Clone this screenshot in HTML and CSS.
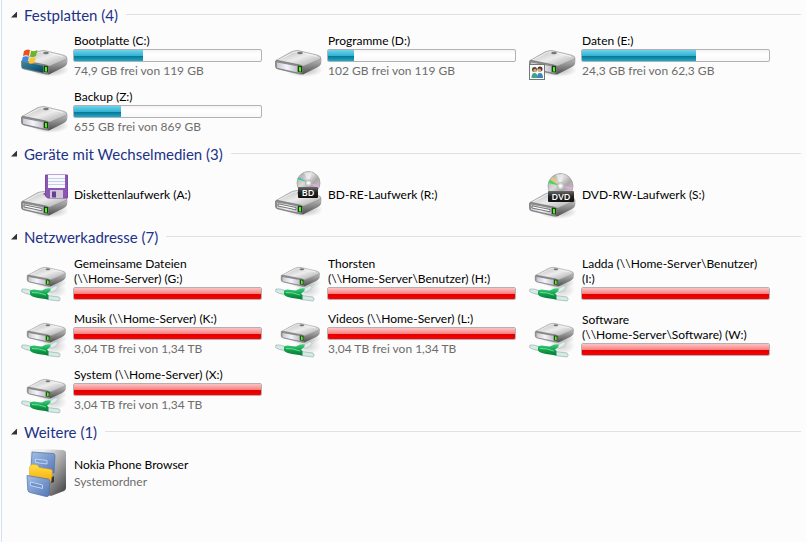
FILE: index.html
```
<!DOCTYPE html>
<html lang="de">
<head>
    <meta charset="UTF-8">
    <meta name="viewport" content="width=device-width, initial-scale=1.0">
    <title>Computer</title>
    <link rel="stylesheet" href="styles.css">
</head>
<body>
    <!-- shared icons -->
    <svg class="sprite" width="0" height="0" aria-hidden="true">
        <defs>
            <linearGradient id="top" x1="0" y1="0" x2="1" y2="1">
                <stop offset="0" stop-color="#b4b4b4"/>
                <stop offset="0.5" stop-color="#ececec"/>
                <stop offset="1" stop-color="#a0a0a0"/>
            </linearGradient>
            <linearGradient id="side" x1="0" y1="0" x2="0" y2="1">
                <stop offset="0" stop-color="#c6c6c6"/>
                <stop offset="1" stop-color="#4c4c4c"/>
            </linearGradient>
            <linearGradient id="front" x1="0" y1="0" x2="1" y2="0">
                <stop offset="0" stop-color="#c9c9d2"/>
                <stop offset="0.5" stop-color="#f4f4fc"/>
                <stop offset="1" stop-color="#c2c2cc"/>
            </linearGradient>
            <linearGradient id="teal" x1="0" y1="0" x2="1" y2="1">
                <stop offset="0" stop-color="#4b7f92"/>
                <stop offset="0.5" stop-color="#1b6b88"/>
                <stop offset="1" stop-color="#123c50"/>
            </linearGradient>
            <linearGradient id="disc" x1="0" y1="0" x2="1" y2="1">
                <stop offset="0" stop-color="#9c9c9c"/>
                <stop offset="0.4" stop-color="#dcdcdc"/>
                <stop offset="0.6" stop-color="#a8a8a8"/>
                <stop offset="1" stop-color="#dcdcdc"/>
            </linearGradient>
            <linearGradient id="label" x1="0" y1="0" x2="0" y2="1">
                <stop offset="0" stop-color="#6a6a6a"/>
                <stop offset="0.5" stop-color="#222"/>
                <stop offset="1" stop-color="#111"/>
            </linearGradient>
            <linearGradient id="green" x1="0" y1="0" x2="0" y2="1">
                <stop offset="0" stop-color="#3fd07c"/>
                <stop offset="0.5" stop-color="#12a34e"/>
                <stop offset="1" stop-color="#067a35"/>
            </linearGradient>
            <linearGradient id="drawer" x1="0" y1="0" x2="1" y2="1">
                <stop offset="0" stop-color="#a3bfe6"/>
                <stop offset="1" stop-color="#5476b4"/>
            </linearGradient>
            <linearGradient id="cabinet" x1="0" y1="0" x2="1" y2="1">
                <stop offset="0.2" stop-color="#f0f0f0"/>
                <stop offset="0.6" stop-color="#9a9a9a"/>
                <stop offset="1" stop-color="#3a3a3a"/>
            </linearGradient>
            <linearGradient id="folder" x1="0" y1="0" x2="0" y2="1">
                <stop offset="0" stop-color="#ffe04c"/>
                <stop offset="1" stop-color="#f7ac00"/>
            </linearGradient>
            <radialGradient id="shade">
                <stop offset="0" stop-color="#000" stop-opacity="0.3"/>
                <stop offset="1" stop-color="#000" stop-opacity="0"/>
            </radialGradient>
        </defs>

        <symbol id="drive" viewBox="0 0 48 48">
            <ellipse cx="30" cy="38" rx="19" ry="7" fill="url(#shade)"/>
            <path d="M27 32 L46 25.500 Q47.500 26 47.500 28 L47 32 Q46 34 43 35.500 L29 42.500 L26 42Z" fill="url(#side)"/>
            <path d="M2 28.500 L17 20 Q20 18.500 24 18.500 L43 23 Q47.500 24 47 27 L30 34 Q27 34.500 24 33.500 L4 30Z" fill="url(#top)" stroke="#8a8a8a" stroke-width="0.600"/>
            <path d="M4 28.500 L19 20.500 Q22 19.500 25 20 L43 24.500" fill="none" stroke="#fff" stroke-opacity="0.600"/>
            <path d="M1.500 29 Q2 28 4 28.500 L26 33 Q29 33.500 29 36 L28.500 41 Q28 42.500 25.500 42 L4 37 Q1.500 36.500 1.500 34.500Z" fill="#8d8d8d" stroke="#666" stroke-width="0.600"/>
            <path d="M3 30.500 L23 34.300 V40.200 L3 35.800Z" fill="url(#front)"/>
            <ellipse cx="26" cy="21" rx="2.800" ry="1.200" fill="#777"/>
            <path d="M24 33.500 L28 34.300 V40.500 L24 39.700Z" fill="#123f12"/>
            <path d="M25 34.800 L27 35.200 V39.700 L25 39.300Z" fill="#5bf01c"/>
        </symbol>

        <symbol id="slot-drive" viewBox="0 0 48 48">
            <use href="#drive" width="48" height="48"/>
            <path d="M4 31.800 L22 35.500 V37.800 L4 34Z" fill="#fff" stroke="#555" stroke-width="0.800"/>
        </symbol>

        <symbol id="system-drive" viewBox="0 0 48 48">
            <use href="#drive" width="48" height="48"/>
            <path d="M2 29.500 L23.500 33.800 V40.800 L2 36Z" fill="url(#teal)"/>
            <path d="M4 19 Q7 16.500 10 18 L9 24 Q6 22.500 3 24Z" fill="#e8541e"/>
            <path d="M11 18.500 Q14 20 17.500 18 L16 24 Q13 26 10 24.500Z" fill="#6cb52a"/>
            <path d="M2.800 25 Q6 23.500 8.800 25 L7.500 30.500 Q4.500 29 1.500 30.500Z" fill="#3c8ad8"/>
            <path d="M9.800 25.500 Q13 27 15.800 25 L14.500 30.500 Q11.500 32.500 8.500 31Z" fill="#fbc52c"/>
        </symbol>

        <symbol id="shared-drive" viewBox="0 0 48 48">
            <use href="#drive" width="48" height="48"/>
            <rect x="1.500" y="32.500" width="15" height="15" fill="#f6fafc" stroke="#777"/>
            <circle cx="6.500" cy="37.500" r="2.500" fill="#5d4126"/>
            <circle cx="7" cy="38.500" r="1.700" fill="#dba67c"/>
            <path d="M3.500 46 Q3.500 41 6.500 41 Q9.500 41 9.500 46Z" fill="#3ba783"/>
            <circle cx="12" cy="37" r="2.500" fill="#4a3520"/>
            <circle cx="11.500" cy="38.300" r="1.700" fill="#dba67c"/>
            <path d="M9 46 Q9 41 12 41 Q15 41 15 46Z" fill="#3a86b8"/>
        </symbol>

        <symbol id="floppy-drive" viewBox="0 0 48 48">
            <use href="#slot-drive" y="2" width="48" height="48"/>
            <path d="M25.500 4 H47.500 V27 H27.500 L25.500 25Z" fill="#8d56b4" stroke="#7c49a4"/>
            <rect x="28" y="4" width="17" height="13" fill="#f7f9ff"/>
            <path d="M28 7.500 H45 M28 10.500 H45 M28 13.500 H45" stroke="#c4cfe8"/>
            <rect x="30" y="19" width="13" height="8" fill="#cfc6da"/>
            <rect x="32" y="20.500" width="4" height="6" fill="#6a3f8c"/>
        </symbol>

        <symbol id="bd-drive" viewBox="0 0 48 48">
            <use href="#slot-drive" y="1" width="48" height="48"/>
            <circle cx="34.500" cy="12" r="11.500" fill="url(#disc)" stroke="#999" stroke-width="0.700"/>
            <path d="M34.500 12 L23.500 8 L24.500 6Z" fill="#33d36a"/>
            <path d="M34.500 12 L25 5.500 L26.500 4Z" fill="#c6a8ea"/>
            <path d="M34.500 12 L45 14 L44 17Z" fill="#e9a6dd"/>
            <path d="M34.500 12 L30 1.500 L38 1Z" fill="#fff" fill-opacity="0.500"/>
            <circle cx="34.500" cy="12" r="3.200" fill="#d8d8d8" stroke="#aaa" stroke-width="0.700"/>
            <circle cx="34.500" cy="12" r="1.300" fill="#fff"/>
            <rect x="24" y="16" width="20" height="11" rx="1" fill="url(#label)"/>
        </symbol>

        <symbol id="dvd-drive" viewBox="0 0 48 48">
            <use href="#slot-drive" y="3" width="48" height="48"/>
            <circle cx="32.500" cy="15" r="12.500" fill="url(#disc)" stroke="#999" stroke-width="0.700"/>
            <path d="M32.500 15 L20.500 12 L22 9Z" fill="#45d858"/>
            <path d="M32.500 15 L22.500 8 L24.500 6Z" fill="#f0c46a"/>
            <path d="M32.500 15 L44.500 16 L44 19Z" fill="#e9a6dd"/>
            <path d="M32.500 15 L28 3.500 L36 3Z" fill="#fff" fill-opacity="0.500"/>
            <circle cx="32.500" cy="15" r="3.500" fill="#d8d8d8" stroke="#aaa" stroke-width="0.700"/>
            <circle cx="32.500" cy="15" r="1.400" fill="#fff"/>
            <rect x="20" y="20" width="26" height="11" rx="1" fill="url(#label)"/>
        </symbol>

        <symbol id="network-drive" viewBox="0 0 48 48">
            <ellipse cx="34" cy="36" rx="13" ry="8" fill="url(#shade)" opacity="0.600"/>
            <g transform="translate(6 -1.500) scale(0.840 0.800)">
                <use href="#drive" width="48" height="48"/>
            </g>
            <path d="M29 36 Q32 33 36 31.500 L38 33.500 Q36 37 31 38.500Z" fill="#dfeeec" stroke="#a4bdba" stroke-width="0.700"/>
            <path d="M2 35 Q6 34.500 11 36.500 L11 40.500 Q5 40 1.500 37.500Z" fill="#d6eae6" stroke="#96b3af" stroke-width="0.700"/>
            <path d="M27 41.500 L39 43 Q41.500 45 39 47 L27 45.500Z" fill="#d6eae6" stroke="#96b3af" stroke-width="0.700"/>
            <path d="M10 36.500 Q13 35 17 36 L22 36.500 Q27 33.500 30.500 34.500 Q31.500 37 27 39.500 L28.500 41 V45.500 L18 44 Q11 42.500 10 40.500Z" fill="url(#green)"/>
            <path d="M12 38.500 Q18 38 26 41" fill="none" stroke="#8fecb6" stroke-opacity="0.700"/>
        </symbol>

        <symbol id="file-cabinet" viewBox="0 0 48 48">
            <path d="M10 3 Q10 1 13 0.500 L18 0 L43 1 Q46 1.500 46 4 V39 Q46 41 44 42 L31 47 L20 44 L10 30Z" fill="url(#cabinet)"/>
            <path d="M12 3 L33.500 4.500 Q35 5 35 6.500 L34 24 L11 20.500Z" fill="url(#drawer)" stroke="#4d6ea8" stroke-width="0.700"/>
            <path d="M15.500 10 V13.500 L27 15 V11.500Z" fill="#7d9dd0" stroke="#bcd3f4"/>
            <path d="M31 29 L34 27 V33 L31 34Z" fill="#2e3542"/>
            <path d="M9.500 18 Q10.500 15 13.500 15.500 L17.500 16 L19 18.500 L31 20.500 Q32.500 21 32.300 22.500 L31 33 L9.500 30Z" fill="url(#folder)" stroke="#e5a412" stroke-width="0.500"/>
            <path d="M7 26.500 L28.500 30 Q30 30.500 29.800 32.500 L29 46 Q28.500 48 26 47.500 L10 43.500 Q8 43 7.800 41Z" fill="url(#drawer)" stroke="#4d6ea8" stroke-width="0.700"/>
            <path d="M10.500 33 V36.500 L22.500 39.500 V36Z" fill="#7191ca" stroke="#bcd3f4"/>
        </symbol>
    </svg>

    <main class="explorer">
        <details class="group" open>
            <summary class="group-header"><span class="arrow"></span>Festplatten (4)</summary>
            <div class="items">
                <div class="item">
                    <svg class="icon"><use href="#system-drive"/></svg>
                    <div class="info">
                        <div class="name">Bootplatte (C:)</div>
                        <div class="bar"><div class="fill" style="width: 37%"></div></div>
                        <div class="detail">74,9 GB frei von 119 GB</div>
                    </div>
                </div>
                <div class="item">
                    <svg class="icon"><use href="#drive"/></svg>
                    <div class="info">
                        <div class="name">Programme (D:)</div>
                        <div class="bar"><div class="fill" style="width: 14%"></div></div>
                        <div class="detail">102 GB frei von 119 GB</div>
                    </div>
                </div>
                <div class="item">
                    <svg class="icon"><use href="#shared-drive"/></svg>
                    <div class="info">
                        <div class="name">Daten (E:)</div>
                        <div class="bar"><div class="fill" style="width: 61%"></div></div>
                        <div class="detail">24,3 GB frei von 62,3 GB</div>
                    </div>
                </div>
                <div class="item">
                    <svg class="icon"><use href="#drive"/></svg>
                    <div class="info">
                        <div class="name">Backup (Z:)</div>
                        <div class="bar"><div class="fill" style="width: 25%"></div></div>
                        <div class="detail">655 GB frei von 869 GB</div>
                    </div>
                </div>
            </div>
        </details>

        <details class="group" open>
            <summary class="group-header"><span class="arrow"></span>Geräte mit Wechselmedien (3)</summary>
            <div class="items">
                <div class="item">
                    <svg class="icon"><use href="#floppy-drive"/></svg>
                    <div class="info">
                        <div class="name">Diskettenlaufwerk (A:)</div>
                    </div>
                </div>
                <div class="item">
                    <svg class="icon"><use href="#bd-drive"/><text x="34" y="25" class="disc-text">BD</text></svg>
                    <div class="info">
                        <div class="name">BD-RE-Laufwerk (R:)</div>
                    </div>
                </div>
                <div class="item">
                    <svg class="icon"><use href="#dvd-drive"/><text x="33" y="29" class="disc-text">DVD</text></svg>
                    <div class="info">
                        <div class="name">DVD-RW-Laufwerk (S:)</div>
                    </div>
                </div>
            </div>
        </details>

        <details class="group" open>
            <summary class="group-header"><span class="arrow"></span>Netzwerkadresse (7)</summary>
            <div class="items">
                <div class="item">
                    <svg class="icon"><use href="#network-drive"/></svg>
                    <div class="info">
                        <div class="name">Gemeinsame Dateien<br>(\\Home-Server) (G:)</div>
                        <div class="bar"><div class="fill full" style="width: 100%"></div></div>
                    </div>
                </div>
                <div class="item">
                    <svg class="icon"><use href="#network-drive"/></svg>
                    <div class="info">
                        <div class="name">Thorsten<br>(\\Home-Server\Benutzer) (H:)</div>
                        <div class="bar"><div class="fill full" style="width: 100%"></div></div>
                    </div>
                </div>
                <div class="item">
                    <svg class="icon"><use href="#network-drive"/></svg>
                    <div class="info">
                        <div class="name">Ladda (\\Home-Server\Benutzer)<br>(I:)</div>
                        <div class="bar"><div class="fill full" style="width: 100%"></div></div>
                    </div>
                </div>
                <div class="item">
                    <svg class="icon"><use href="#network-drive"/></svg>
                    <div class="info">
                        <div class="name">Musik (\\Home-Server) (K:)</div>
                        <div class="bar"><div class="fill full" style="width: 100%"></div></div>
                        <div class="detail">3,04 TB frei von 1,34 TB</div>
                    </div>
                </div>
                <div class="item">
                    <svg class="icon"><use href="#network-drive"/></svg>
                    <div class="info">
                        <div class="name">Videos (\\Home-Server) (L:)</div>
                        <div class="bar"><div class="fill full" style="width: 100%"></div></div>
                        <div class="detail">3,04 TB frei von 1,34 TB</div>
                    </div>
                </div>
                <div class="item">
                    <svg class="icon"><use href="#network-drive"/></svg>
                    <div class="info">
                        <div class="name">Software<br>(\\Home-Server\Software) (W:)</div>
                        <div class="bar"><div class="fill full" style="width: 100%"></div></div>
                    </div>
                </div>
                <div class="item">
                    <svg class="icon"><use href="#network-drive"/></svg>
                    <div class="info">
                        <div class="name">System (\\Home-Server) (X:)</div>
                        <div class="bar"><div class="fill full" style="width: 100%"></div></div>
                        <div class="detail">3,04 TB frei von 1,34 TB</div>
                    </div>
                </div>
            </div>
        </details>

        <details class="group" open>
            <summary class="group-header"><span class="arrow"></span>Weitere (1)</summary>
            <div class="items">
                <div class="item">
                    <svg class="icon"><use href="#file-cabinet"/></svg>
                    <div class="info">
                        <div class="name">Nokia Phone Browser</div>
                        <div class="detail">Systemordner</div>
                    </div>
                </div>
            </div>
        </details>
    </main>
</body>
</html>
```

FILE: styles.css
```
* {
    margin: 0;
    padding: 0;
    box-sizing: border-box;
}

body {
    font-family: "Segoe UI", Lato, "Open Sans", sans-serif;
    font-size: 12px;
    line-height: 16px;
    color: #000;
    background: #fcfcfc;
}

.sprite {
    position: absolute;
}

.explorer {
    min-height: 100vh;
    margin-left: 1px;
    padding: 1px 5px 0 9px;
    border-left: 1px solid #d6e0f0;
}

.group-header {
    display: flex;
    align-items: center;
    height: 27px;
    font-size: 15px;
    line-height: 20px;
    color: #1e3287;
    cursor: pointer;
    list-style: none;
}

.group-header::after {
    content: "";
    flex: 1;
    height: 1px;
    margin-left: 8px;
    background: #e0e1e4;
}

.arrow {
    width: 6px;
    height: 6px;
    margin-right: 7px;
    background: #333;
    clip-path: polygon(100% 0, 100% 100%, 0 100%);
}

.items {
    display: grid;
    grid-template-columns: repeat(auto-fill, 254px);
    grid-auto-rows: 56px;
    padding-left: 9px;
}

.item {
    display: flex;
    align-items: center;
}

.icon {
    flex: none;
    width: 48px;
    height: 48px;
    margin-right: 5px;
}

.info {
    width: 189px;
}

.name {
    padding: 0 0 1px 1px;
    line-height: 15px;
    white-space: nowrap;
}

.detail {
    padding: 1px 0 0 1px;
    color: #6d6d6d;
}

.bar {
    height: 13px;
    border: 1px solid #b2b2b2;
    border-radius: 2px;
    background: linear-gradient(#f4f4f4, #fff 40%, #f8f8f8);
    overflow: hidden;
}

.fill {
    height: 100%;
    background: linear-gradient(#6ed4ec, #35b3d3 50%, #067592 55%, #1fa9c9);
}

.fill.full {
    background: linear-gradient(#fbc4c4, #fa8080 52%, #e20000 58%, #fc0000);
}

.disc-text {
    font-family: "Open Sans", sans-serif;
    font-size: 9px;
    font-weight: 600;
    fill: #fff;
    text-anchor: middle;
}
```
